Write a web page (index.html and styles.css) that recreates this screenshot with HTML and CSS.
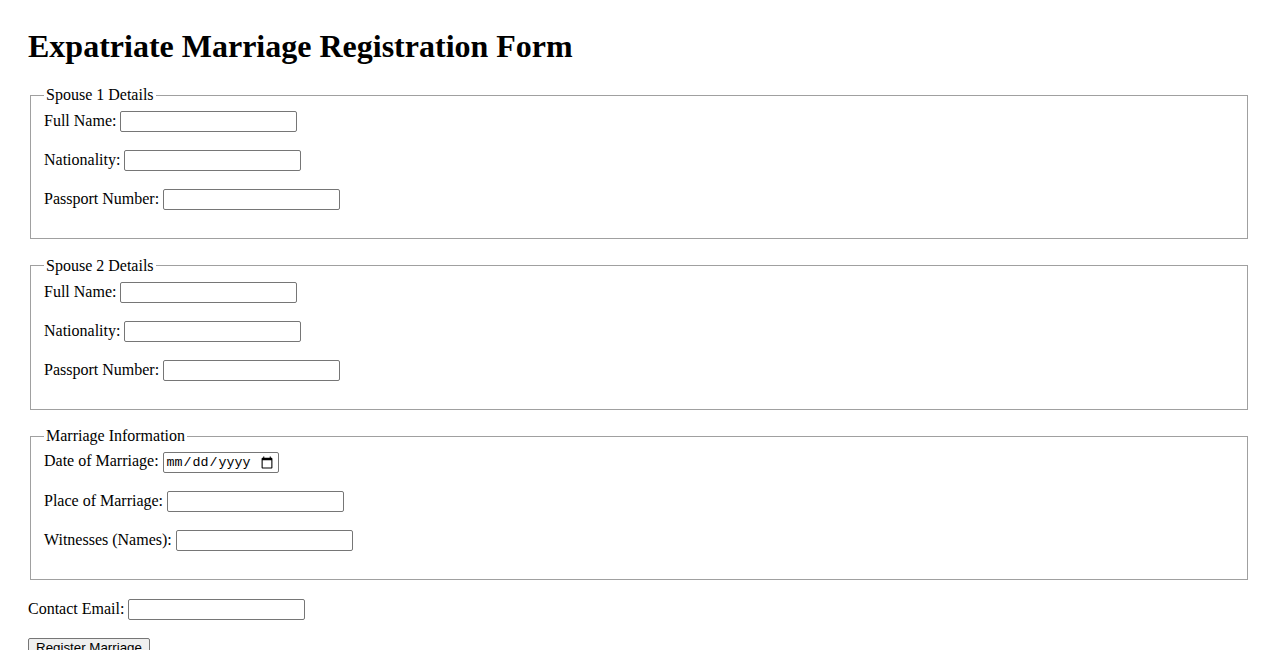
FILE: index.html
```html
<!DOCTYPE html>
<html lang="en">
<head>
<meta charset="utf-8">
<title>Expatriate Marriage Registration Form</title>
<link rel="stylesheet" href="styles.css">
</head>
<body>
<h1 class="title">Expatriate Marriage Registration Form</h1>
<form class="form">
  <fieldset class="group">
    <legend class="legend">Spouse 1 Details</legend>
    <div class="row"><label>Full Name:</label> <input class="field" type="text"></div>
    <div class="row"><label>Nationality:</label> <input class="field" type="text"></div>
    <div class="row"><label>Passport Number:</label> <input class="field" type="text"></div>
  </fieldset>
  <fieldset class="group">
    <legend class="legend">Spouse 2 Details</legend>
    <div class="row"><label>Full Name:</label> <input class="field" type="text"></div>
    <div class="row"><label>Nationality:</label> <input class="field" type="text"></div>
    <div class="row"><label>Passport Number:</label> <input class="field" type="text"></div>
  </fieldset>
  <fieldset class="group">
    <legend class="legend">Marriage Information</legend>
    <div class="row"><label>Date of Marriage:</label> <input class="field date" type="date"></div>
    <div class="row"><label>Place of Marriage:</label> <input class="field" type="text"></div>
    <div class="row"><label>Witnesses (Names):</label> <input class="field" type="text"></div>
  </fieldset>
  <div class="row contact"><label>Contact Email:</label> <input class="field" type="email"></div>
  <button class="submit" type="submit">Register Marriage</button>
</form>
</body>
</html>
```
FILE: styles.css
```css
body {
  margin: 8px;
  padding: 20px;
  font-family: "Liberation Serif", "Times New Roman", serif;
  font-size: 16px;
  color: #000;
  background: #fff;
}
.title {
  font-size: 32px;
  font-weight: bold;
  margin: 0 0 21px;
}
.group {
  margin: 0 2px 17.5px;
  padding: 7px 13px 10px;
  border: 1px solid #a0a0a0;
}
.legend {
  padding: 0 2px;
}
.row {
  margin-bottom: 18px;
}
.contact {
  padding-top: 1px;
}
.field {
  box-sizing: border-box;
  width: 177px;
  height: 21px;
  border: 1px solid #767676;
  border-radius: 2px;
  padding: 1px 2px;
  font-family: "Liberation Sans", Arial, sans-serif;
  font-size: 13.33px;
  vertical-align: baseline;
}
.date {
  width: 116px;
  font-family: "Liberation Mono", monospace;
}
.submit {
  font-family: "Liberation Sans", Arial, sans-serif;
  font-size: 13.33px;
  padding: 1px 7px;
  border: 1px solid #767676;
  border-radius: 2px;
  background: #efefef;
  color: #000;
}
```
